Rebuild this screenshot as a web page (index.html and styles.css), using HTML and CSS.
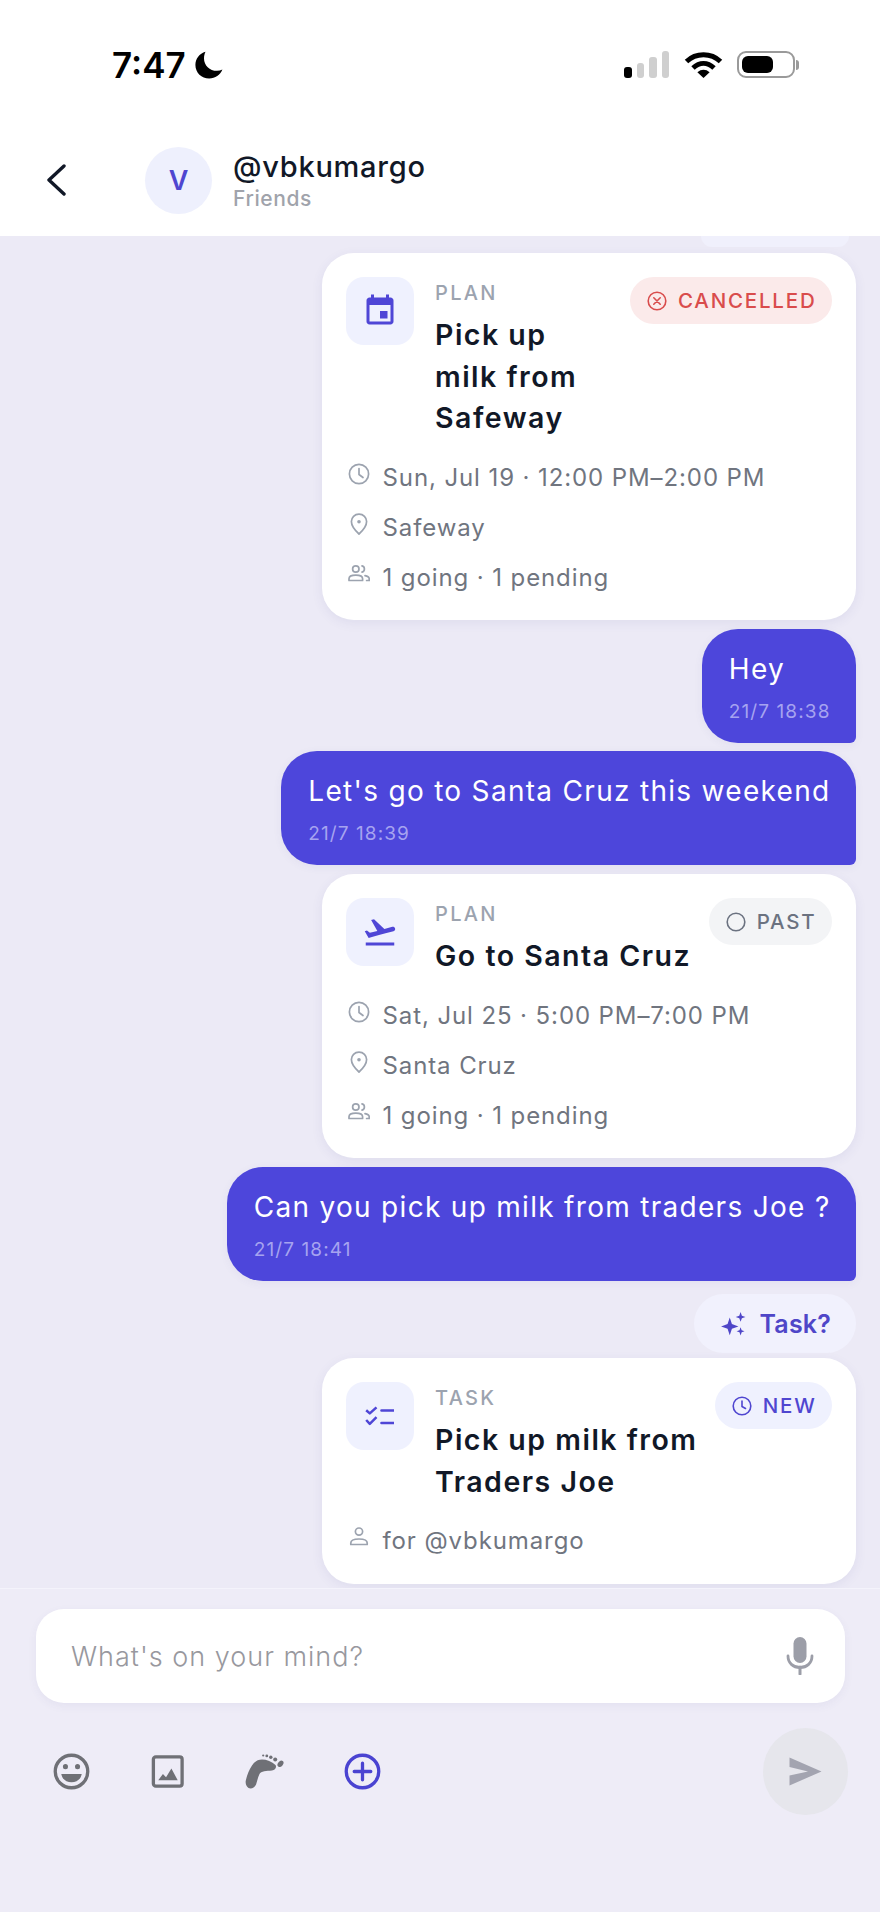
FILE: index.html
```html
<!DOCTYPE html>
<html lang="en">
<head>
<meta charset="utf-8">
<title>@vbkumargo</title>
<link rel="stylesheet" href="styles.css">
</head>
<body>
<svg class="defs" width="0" height="0" aria-hidden="true">
  <symbol id="i-clock" viewBox="0 0 22 22"><circle cx="11" cy="11" r="9.6" fill="none" stroke="currentColor" stroke-width="1.7"/><path d="M11 5.5V11.5L15 14.5" fill="none" stroke="currentColor" stroke-width="1.7" stroke-linecap="round" stroke-linejoin="round"/></symbol>
  <symbol id="i-pin" viewBox="0 0 22 22"><path d="M11 1.2C6.6 1.2 3.4 4.4 3.4 8.6 3.4 13 7.6 18 11 21 14.4 18 18.6 13 18.6 8.6 18.6 4.4 15.4 1.2 11 1.2Z" fill="none" stroke="currentColor" stroke-width="1.7" stroke-linejoin="round"/><circle cx="11" cy="8.8" r="1.8" fill="currentColor"/></symbol>
  <symbol id="i-people" viewBox="0 0 22 22"><circle cx="7.8" cy="6" r="3.2" fill="none" stroke="currentColor" stroke-width="1.7"/><path d="M14 2.9a3.2 3.2 0 0 1 0 6.2" fill="none" stroke="currentColor" stroke-width="1.7" stroke-linecap="round"/><path d="M1 17.5v-1.7c0-2.2 3-3.6 6.8-3.6s6.8 1.4 6.8 3.6v1.7Z" fill="none" stroke="currentColor" stroke-width="1.7" stroke-linejoin="round"/><path d="M17 12.6c2.4.5 4.2 1.6 4.2 3.2v1.7h-2.6" fill="none" stroke="currentColor" stroke-width="1.7" stroke-linecap="round"/></symbol>
  <symbol id="i-person" viewBox="0 0 22 22"><circle cx="11" cy="5.6" r="3.6" fill="none" stroke="currentColor" stroke-width="1.7"/><path d="M2.8 18.5v-1.6c0-2.4 3.6-3.9 8.2-3.9s8.2 1.5 8.2 3.9v1.6Z" fill="none" stroke="currentColor" stroke-width="1.7" stroke-linejoin="round"/></symbol>
</svg>

<div class="screen">
  <header class="top">
    <div class="status">
      <div class="status-left">
        <span class="clock">7:47</span>
        <svg class="moon" viewBox="0 0 28 28"><path d="M10.5 .8C4.4 2.6 .4 7.8.4 14c0 7.6 6.2 13.6 13.8 13.6 6 0 11-3.6 13.2-9-1.6.8-3.4 1.2-5.4 1.2C14.6 19.8 9 14.2 9 7.4 9 5 9.5 2.8 10.5.8Z" fill="#000"/></svg>
      </div>
      <div class="status-right">
        <div class="signal"><i class="bar on h1"></i><i class="bar h2"></i><i class="bar h3"></i><i class="bar h4"></i></div>
        <svg class="wifi" viewBox="0 0 39 27"><path d="M2.5 10.5C12 1.5 27 1.5 36.5 10.5" fill="none" stroke="#000" stroke-width="5"/><path d="M9 17C15.5 11 23.5 11 30 17" fill="none" stroke="#000" stroke-width="5"/><path d="M13.4 21.3 19.5 27 25.6 21.3C21.8 18 17.2 18 13.4 21.3Z" fill="#000"/></svg>
        <div class="battery"><div class="battery-body"><div class="battery-fill"></div></div><div class="battery-nub"></div></div>
      </div>
    </div>
    <div class="nav">
      <svg class="back" viewBox="0 0 20 32"><path d="M18 2 3 16 18 30" fill="none" stroke="#111827" stroke-width="3.4" stroke-linecap="round" stroke-linejoin="round"/></svg>
      <div class="avatar">V</div>
      <div class="who">
        <div class="who-name">@vbkumargo</div>
        <div class="who-sub">Friends</div>
      </div>
    </div>
  </header>

  <main class="chat">
    <div class="peek"></div>

    <article class="card m6">
      <div class="card-head">
        <div class="card-icon">
          <svg class="glyph" viewBox="0 0 24 24"><path d="M17 12h-5v5h5v-5zM16 1v2H8V1H6v2H5c-1.11 0-1.99.9-1.99 2L3 19c0 1.1.89 2 2 2h14c1.1 0 2-.9 2-2V5c0-1.1-.9-2-2-2h-1V1h-2zm3 18H5V8h14v11z" fill="currentColor"/></svg>
        </div>
        <div class="card-body">
          <div class="card-kind">PLAN</div>
          <div class="card-title">Pick up<br>milk from<br>Safeway</div>
        </div>
        <div class="pill pill-red">
          <svg class="pill-icon" viewBox="0 0 20 20"><circle cx="10" cy="10" r="8.8" fill="none" stroke="currentColor" stroke-width="1.6"/><path d="M6.8 6.8l6.4 6.4M13.2 6.8l-6.4 6.4" stroke="currentColor" stroke-width="1.6" stroke-linecap="round"/></svg>
          CANCELLED
        </div>
      </div>
      <ul class="meta">
        <li class="meta-row"><svg class="meta-icon"><use href="#i-clock"/></svg>Sun, Jul 19 · 12:00 PM–2:00 PM</li>
        <li class="meta-row"><svg class="meta-icon"><use href="#i-pin"/></svg>Safeway</li>
        <li class="meta-row"><svg class="meta-icon"><use href="#i-people"/></svg>1 going · 1 pending</li>
      </ul>
    </article>

    <div class="bubble m9"><div class="bubble-text">Hey</div><div class="bubble-time">21/7 18:38</div></div>
    <div class="bubble m8"><div class="bubble-text">Let's go to Santa Cruz this weekend</div><div class="bubble-time">21/7 18:39</div></div>

    <article class="card m9">
      <div class="card-head">
        <div class="card-icon">
          <svg class="glyph" viewBox="0 0 24 24"><path d="M2.5 19h19v2h-19zm19.57-9.36c-.21-.8-1.04-1.28-1.84-1.06L14.92 10l-6.9-6.43-1.93.51 4.14 7.17-4.97 1.33-1.97-1.54-1.45.39 1.82 3.16.77 1.33 1.6-.43 5.31-1.42 4.35-1.16L21 11.49c.81-.23 1.28-1.05 1.07-1.85z" fill="currentColor"/></svg>
        </div>
        <div class="card-body">
          <div class="card-kind">PLAN</div>
          <div class="card-title">Go to Santa Cruz</div>
        </div>
        <div class="pill pill-grey">
          <svg class="pill-icon" viewBox="0 0 20 20"><circle cx="10" cy="10" r="8.8" fill="none" stroke="currentColor" stroke-width="1.6"/></svg>
          PAST
        </div>
      </div>
      <ul class="meta">
        <li class="meta-row"><svg class="meta-icon"><use href="#i-clock"/></svg>Sat, Jul 25 · 5:00 PM–7:00 PM</li>
        <li class="meta-row"><svg class="meta-icon"><use href="#i-pin"/></svg>Santa Cruz</li>
        <li class="meta-row"><svg class="meta-icon"><use href="#i-people"/></svg>1 going · 1 pending</li>
      </ul>
    </article>

    <div class="bubble m9"><div class="bubble-text">Can you pick up milk from traders Joe ?</div><div class="bubble-time">21/7 18:41</div></div>

    <div class="suggest m13">
      <svg class="suggest-icon" viewBox="0 0 24 24"><path d="M9 6l2 6 6 2.2-6 2.2-2 6-2-6-6-2.2 6-2.2Z" fill="currentColor"/><path d="M19 1l1.2 3.3L23.5 5.5 20.2 6.7 19 10l-1.2-3.3L14.5 5.5l3.3-1.2Z" fill="currentColor"/><path d="M19 15l1 2.7 2.7 1-2.7 1-1 2.8-1-2.8-2.7-1 2.7-1Z" fill="currentColor"/></svg>
      Task?
    </div>

    <article class="card m5">
      <div class="card-head">
        <div class="card-icon">
          <svg class="glyph-check" viewBox="0 0 29 21"><path d="M1.2 4.2 4.8 7.4 11.5 1.3M1.2 14 4.8 17.8 11.5 11.2" fill="none" stroke="currentColor" stroke-width="2.5" stroke-linejoin="round"/><path d="M16.5 4.5H28.5M16.5 17H28.5" fill="none" stroke="currentColor" stroke-width="2.6" stroke-linecap="round"/></svg>
        </div>
        <div class="card-body">
          <div class="card-kind">TASK</div>
          <div class="card-title">Pick up milk from Traders Joe</div>
        </div>
        <div class="pill pill-blue">
          <svg class="pill-icon" viewBox="0 0 20 20"><circle cx="10" cy="10" r="8.8" fill="none" stroke="currentColor" stroke-width="1.6"/><path d="M10 5v5.5l3.5 2" fill="none" stroke="currentColor" stroke-width="1.6" stroke-linecap="round"/></svg>
          NEW
        </div>
      </div>
      <ul class="meta">
        <li class="meta-row"><svg class="meta-icon"><use href="#i-person"/></svg>for @vbkumargo</li>
      </ul>
    </article>
  </main>

  <footer class="composer">
    <div class="input">
      <span class="placeholder">What's on your mind?</span>
      <svg class="mic" viewBox="0 0 28 38"><rect x="7.5" y="0" width="13" height="26" rx="6.5" fill="currentColor"/><path d="M2 19c0 7 5 11.5 12 11.5S26 26 26 19" fill="none" stroke="currentColor" stroke-width="2.8" stroke-linecap="round"/><path d="M14 30v7" stroke="currentColor" stroke-width="3" stroke-linecap="round"/></svg>
    </div>
    <div class="tools">
      <div class="tool-list">
        <svg class="tool" viewBox="0 0 38 38"><circle cx="19" cy="19" r="16.7" fill="none" stroke="currentColor" stroke-width="3.4"/><circle cx="12.8" cy="14" r="2.6" fill="currentColor"/><circle cx="25.2" cy="14" r="2.6" fill="currentColor"/><path d="M8.5 21.5H29.5C28.6 27 24.3 30 19 30S9.4 27 8.5 21.5Z" fill="currentColor"/></svg>
        <svg class="tool" viewBox="0 0 38 38"><rect x="4.5" y="4" width="29.5" height="30" rx="2.5" fill="none" stroke="currentColor" stroke-width="3.4"/><path d="M9.5 28 14.3 21.5 17.5 25 23 16 29.5 28Z" fill="currentColor"/></svg>
        <svg class="tool tool-foot" viewBox="0 0 40 36"><path d="M.7 27C2 21 4 16 7 11.5 9.5 7.5 13 5.5 17 5.5 21.5 5.5 27 7.5 30.5 11 32 13.5 30 16 27 16.5 21.5 17 16 17 14.5 20 13 23 12.5 26 11.5 29 10.5 33 8 34.5 5.5 34.5 2.5 34.5.2 31 .7 27Z" fill="currentColor"/><ellipse cx="35.5" cy="9.8" rx="3.5" ry="2.5" transform="rotate(-50 35.5 9.8)" fill="currentColor"/><circle cx="30.2" cy="5.5" r="2" fill="currentColor"/><circle cx="25.8" cy="3.2" r="1.7" fill="currentColor"/><circle cx="21.8" cy="1.9" r="1.4" fill="currentColor"/><circle cx="18.2" cy="1.5" r="1.1" fill="currentColor"/></svg>
        <svg class="tool tool-add" viewBox="0 0 38 38"><circle cx="19" cy="19" r="16.7" fill="none" stroke="currentColor" stroke-width="3.4"/><path d="M19 10.5v17M10.5 19h17" stroke="currentColor" stroke-width="3.4" stroke-linecap="round"/></svg>
      </div>
      <div class="send">
        <svg class="send-icon" viewBox="0 0 33 29"><path d="M.5 .5 32.5 14.5.5 28.5V18.5L19 14.5.5 10Z" fill="currentColor"/></svg>
      </div>
    </div>
  </footer>
</div>
</body>
</html>
```

FILE: styles.css
```css
* { box-sizing: border-box; }

html, body {
  margin: 0;
  padding: 0;
  background: #eeecf7;
}

body {
  font-family: "Inter", "Liberation Sans", sans-serif;
  color: #111827;
}

.defs { position: absolute; }

.screen {
  width: 880px;
  height: 1912px;
  display: flex;
  flex-direction: column;
  overflow: hidden;
}

/* header */
.top {
  flex: none;
  height: 236px;
  background: #fff;
}

.status {
  height: 130px;
  padding: 51px 81px 0 112px;
  display: flex;
  justify-content: space-between;
  align-items: flex-start;
}

.status-left {
  display: flex;
  align-items: center;
  gap: 9px;
}

.clock {
  font-size: 35px;
  line-height: 28px;
  font-weight: 600;
  color: #000;
}

.moon { width: 28px; height: 28px; }

.status-right {
  display: flex;
  align-items: flex-end;
  height: 27px;
}

.signal {
  display: flex;
  align-items: flex-end;
  gap: 5px;
  margin-right: 15px;
}

.bar {
  display: block;
  width: 7.5px;
  border-radius: 3px;
  background: #cfcfcf;
}
.bar.on { background: #000; }
.h1 { height: 11px; }
.h2 { height: 15px; }
.h3 { height: 21px; }
.h4 { height: 27px; }

.wifi { width: 39px; height: 27px; margin-right: 14px; }

.battery {
  display: flex;
  align-items: center;
}

.battery-body {
  width: 58px;
  height: 27px;
  padding: 3px;
  border: 2px solid #9a9a9a;
  border-radius: 9px;
}

.battery-fill {
  width: 31px;
  height: 100%;
  background: #000;
  border-radius: 6px;
}

.battery-nub {
  width: 3px;
  height: 10px;
  margin-left: 1px;
  background: #9a9a9a;
  border-radius: 0 3px 3px 0;
}

.nav {
  height: 100px;
  padding-left: 46px;
  display: flex;
  align-items: center;
}

.back { width: 20px; height: 32px; margin-right: 79px; }

.avatar {
  width: 67px;
  height: 67px;
  border-radius: 50%;
  background: #eef0fd;
  color: #4f46d0;
  font-size: 27px;
  font-weight: 600;
  display: flex;
  align-items: center;
  justify-content: center;
  margin-right: 21px;
}

.who { padding-top: 1px; }

.who-name {
  font-size: 29px;
  line-height: 36px;
  font-weight: 500;
  letter-spacing: .75px;
  color: #111827;
}

.who-sub {
  font-size: 21px;
  line-height: 28px;
  font-weight: 500;
  letter-spacing: .6px;
  color: #a0a3ab;
}

/* chat */
.chat {
  flex: 1;
  min-height: 0;
  background: #eceaf6;
  padding-right: 24.5px;
  display: flex;
  flex-direction: column;
  align-items: flex-end;
}

.chat > * { flex: none; }

.m5 { margin-top: 5px; }
.m6 { margin-top: 6px; }
.m8 { margin-top: 8px; }
.m9 { margin-top: 9px; }
.m13 { margin-top: 13px; }

.peek {
  width: 148px;
  height: 11px;
  margin-right: 7px;
  background: #f0f0fc;
  border-radius: 0 0 30px 30px;
}

.card {
  width: 534px;
  padding: 24px 24px 18px;
  background: #fff;
  border-radius: 32px;
  box-shadow: 0 3px 12px rgba(70, 60, 140, .08);
}

.card-head {
  display: flex;
  align-items: flex-start;
}

.card-icon {
  flex: none;
  width: 68px;
  height: 68px;
  margin-right: 21.5px;
  border-radius: 18px;
  background: #eff1fe;
  color: #4f46d6;
  display: flex;
  align-items: center;
  justify-content: center;
}

.glyph { width: 36px; height: 36px; }
.glyph-check { width: 29px; height: 21px; }

.card-body {
  flex: 1;
  min-width: 0;
  padding-right: 10px;
}

.card-kind {
  height: 31px;
  padding-top: 2px;
  font-size: 20px;
  line-height: 28px;
  font-weight: 500;
  letter-spacing: 2.3px;
  color: #9ca3af;
}

.card-title {
  margin-top: 6px;
  font-size: 28.5px;
  line-height: 41.5px;
  font-weight: 600;
  letter-spacing: 1.5px;
  color: #111827;
}

.pill {
  flex: none;
  height: 47px;
  padding: 0 15px 0 17px;
  border-radius: 24px;
  display: flex;
  align-items: center;
  gap: 11px;
  font-size: 20.5px;
  font-weight: 500;
  letter-spacing: 1.8px;
  white-space: nowrap;
}

.pill-icon { width: 20px; height: 20px; flex: none; }

.pill-red { background: #fbeaea; color: #d94c4c; }
.pill-grey { background: #f3f4f6; color: #6b7280; }
.pill-blue { background: #eff1fe; color: #4f46d0; }

.meta {
  list-style: none;
  margin: 13.5px 0 0;
  padding: 0;
}

.meta-row {
  height: 50px;
  padding-left: 37px;
  display: flex;
  align-items: center;
  font-size: 24px;
  letter-spacing: .9px;
  color: #70757f;
}

.meta-icon {
  flex: none;
  width: 22px;
  height: 22px;
  margin-right: 13px;
  margin-left: -35px;
  margin-top: -7px;
  color: #9ca3af;
}

.bubble {
  padding: 22px 25px 0 27px;
  height: 114px;
  background: #4d46db;
  color: #fff;
  border-radius: 36px 36px 6px 36px;
  box-shadow: 0 2px 10px rgba(70, 60, 140, .06);
}

.bubble-text {
  font-size: 28px;
  line-height: 36px;
  font-weight: 400;
  letter-spacing: 1.3px;
}

.bubble-time {
  margin-top: 12px;
  font-size: 19px;
  line-height: 26px;
  font-weight: 400;
  letter-spacing: 1.1px;
  color: #a6a3f0;
}

.suggest {
  height: 59px;
  width: 162px;
  padding-left: 26px;
  background: #f1f1fd;
  border-radius: 30px;
  color: #4f46c8;
  font-size: 25px;
  font-weight: 600;
  letter-spacing: .2px;
  display: flex;
  align-items: center;
  gap: 14px;
}

.suggest-icon { width: 26px; height: 26px; flex: none; }

/* composer */
.composer {
  flex: none;
  height: 324px;
  padding: 20px 35px 0 36px;
  background: #eeecf7;
  border-top: 1px solid #f4f3fb;
}

.input {
  height: 94px;
  padding: 0 31px 0 35px;
  background: #fff;
  border-radius: 28px;
  display: flex;
  align-items: center;
  justify-content: space-between;
  box-shadow: 0 3px 10px rgba(70, 60, 140, .06);
}

.placeholder {
  font-size: 27px;
  font-weight: 300;
  letter-spacing: 1px;
  color: #98989e;
}

.mic { width: 28px; height: 38px; color: #9c9ea8; }

.tools {
  margin-top: 25px;
  display: flex;
  justify-content: space-between;
  align-items: center;
}

.tool-list {
  display: flex;
  align-items: center;
  gap: 59px;
  padding-left: 17px;
}

.tool { width: 37px; height: 37px; color: #6f7076; display: block; }
.tool-foot { width: 40px; height: 36px; }
.tool-add { color: #4a43d1; }

.send {
  width: 85px;
  height: 87px;
  margin-right: -3px;
  border-radius: 50%;
  background: #e6e6ec;
  display: flex;
  align-items: center;
  justify-content: center;
}

.send-icon { width: 33px; height: 29px; color: #a3a4b0; }
```
